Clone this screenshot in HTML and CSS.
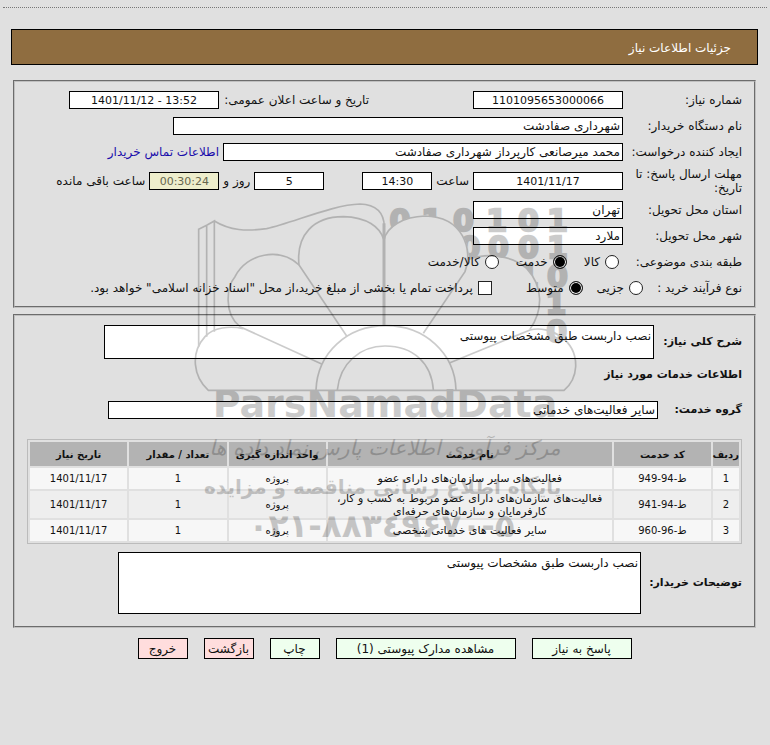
FILE: index.html
```html
<!DOCTYPE html>
<html lang="fa" dir="rtl">
<head>
    <meta charset="UTF-8">
    <meta name="viewport" content="width=device-width, initial-scale=1.0">
    <title>جزئیات اطلاعات نیاز</title>
    <link rel="stylesheet" href="styles.css">
</head>
<body>
    <hr class="top-line">
    <h1 class="title-bar">جزئیات اطلاعات نیاز</h1>

    <form class="need-form">
        <fieldset class="box">
            <div class="row">
                <label class="caption" for="need-no">شماره نیاز:</label>
                <input class="field medium center" id="need-no" value="1101095653000066" readonly>
                <label class="second-caption" for="announce">تاریخ و ساعت اعلان عمومی:</label>
                <input class="field medium center" id="announce" dir="ltr" value="1401/11/12 - 13:52" readonly>
            </div>
            <div class="row">
                <label class="caption" for="buyer">نام دستگاه خریدار:</label>
                <input class="field wide" id="buyer" value="شهرداری صفادشت" readonly>
            </div>
            <div class="row">
                <label class="caption" for="creator">ایجاد کننده درخواست:</label>
                <input class="field long" id="creator" value="محمد میرصانعی کارپرداز شهرداری صفادشت" readonly>
                <a class="contact" href="#">اطلاعات تماس خریدار</a>
            </div>
            <div class="row tall">
                <label class="caption" for="deadline">مهلت ارسال پاسخ: تا تاریخ:</label>
                <input class="field medium center" id="deadline" value="1401/11/17" readonly>
                <label class="unit" for="hour">ساعت</label>
                <input class="field small center" id="hour" value="14:30" readonly>
                <input class="field small center days" id="days" value="5" readonly>
                <label class="unit" for="days">روز و</label>
                <input class="field small center remain" id="remain" value="00:30:24" readonly>
                <label class="unit" for="remain">ساعت باقی مانده</label>
            </div>
            <div class="row">
                <label class="caption" for="province">استان محل تحویل:</label>
                <input class="field medium" id="province" value="تهران" readonly>
            </div>
            <div class="row">
                <label class="caption" for="city">شهر محل تحویل:</label>
                <input class="field medium" id="city" value="ملارد" readonly>
            </div>
            <div class="row">
                <span class="caption">طبقه بندی موضوعی:</span>
                <div class="options subject">
                    <label class="option"><input type="radio" name="subject">کالا</label>
                    <label class="option"><input type="radio" name="subject" checked>خدمت</label>
                    <label class="option"><input type="radio" name="subject">کالا/خدمت</label>
                </div>
            </div>
            <div class="row">
                <span class="caption narrow">نوع فرآیند خرید :</span>
                <div class="options">
                    <label class="option"><input type="radio" name="process">جزیی</label>
                    <label class="option"><input type="radio" name="process" checked>متوسط</label>
                    <label class="option payment"><input type="checkbox">پرداخت تمام یا بخشی از مبلغ خرید،از محل "اسناد خزانه اسلامی" خواهد بود.</label>
                </div>
            </div>
        </fieldset>

        <fieldset class="box details">
            <div class="detail-row">
                <label class="bold" for="summary">شرح کلی نیاز:</label>
                <textarea class="field area" id="summary" rows="2" readonly>نصب داربست طبق مشخصات پیوستی</textarea>
            </div>
            <h2 class="bold heading">اطلاعات خدمات مورد نیاز</h2>
            <div class="detail-row group">
                <label class="bold" for="group">گروه خدمت:</label>
                <input class="field" id="group" value="سایر فعالیت‌های خدماتی" readonly>
            </div>
            <table class="services">
                <colgroup>
                    <col class="col-index">
                    <col class="col-plain">
                    <col class="col-name">
                    <col class="col-plain">
                    <col class="col-plain">
                    <col class="col-plain">
                </colgroup>
                <thead>
                    <tr>
                        <th>ردیف</th>
                        <th>کد خدمت</th>
                        <th>نام خدمت</th>
                        <th>واحد اندازه گیری</th>
                        <th>تعداد / مقدار</th>
                        <th>تاریخ نیاز</th>
                    </tr>
                </thead>
                <tbody>
                    <tr>
                        <td>1</td>
                        <td><bdi dir="rtl">ط-94-949</bdi></td>
                        <td class="name">فعالیت‌های سایر سازمان‌های دارای عضو</td>
                        <td>پروژه</td>
                        <td>1</td>
                        <td>1401/11/17</td>
                    </tr>
                    <tr>
                        <td>2</td>
                        <td><bdi dir="rtl">ط-94-941</bdi></td>
                        <td class="name">فعالیت‌های سازمان‌های دارای عضو مربوط به کسب و کار، کارفرمایان و سازمان‌های حرفه‌ای</td>
                        <td>پروژه</td>
                        <td>1</td>
                        <td>1401/11/17</td>
                    </tr>
                    <tr>
                        <td>3</td>
                        <td><bdi dir="rtl">ط-96-960</bdi></td>
                        <td class="name">سایر فعالیت های خدماتی شخصی</td>
                        <td>پروژه</td>
                        <td>1</td>
                        <td>1401/11/17</td>
                    </tr>
                </tbody>
            </table>
            <div class="detail-row notes">
                <label class="bold" for="notes">توضیحات خریدار:</label>
                <textarea class="field area" id="notes" rows="4" readonly>نصب داربست طبق مشخصات پیوستی</textarea>
            </div>
        </fieldset>

        <div class="buttons">
            <button type="button" class="btn big">پاسخ به نیاز</button>
            <button type="button" class="btn huge">مشاهده مدارک پیوستی (1)</button>
            <button type="button" class="btn">چاپ</button>
            <button type="button" class="btn red">بازگشت</button>
            <button type="button" class="btn red">خروج</button>
        </div>
    </form>

    <svg class="watermark" viewBox="0 0 1200 1080" aria-hidden="true">
        <defs>
            <clipPath id="behind-petals">
                <path d="M612 0 H1200 V480 H1090 C1070 430 1050 410 1056 400 C1090 340 1085 280 1040 235 C990 200 930 190 866 208 C870 130 810 78 735 78 C680 78 640 100 622 130 Z"/>
            </clipPath>
        </defs>
        <g class="lines">
            <path d="M56 470 V118 L80 106 L103 93 V425 M80 106 V440"/>
            <path d="M103 93 C150 122 200 124 260 116 C340 98 460 44 540 42 C590 44 612 70 613 110"/>
            <path d="M612 100 V405" class="spine"/>
            <path d="M500 438 L357 225 C348 135 400 80 490 80 C560 82 600 110 612 150"/>
            <path d="M425 522 L180 410 C130 370 140 290 165 260 C200 190 300 170 357 225"/>
            <path d="M190 416 C150 407 100 412 75 440 C30 490 40 560 85 601 H1152 C1165 590 1185 570 1187 530 C1190 450 1110 405 1050 420 L810 518"/>
            <path d="M730 430 L855 245 C880 180 850 80 735 78 C670 80 620 110 612 150"/>
            <path d="M866 208 C930 185 1000 200 1040 235 C1090 290 1090 360 1050 418"/>
            <path d="M408 600 C412 490 500 407 618 407 C735 407 825 490 828 600"/>
            <path d="M472 600 C480 520 540 468 615 468 C700 468 755 520 760 600"/>
        </g>
        <g class="digits" clip-path="url(#behind-petals)">
            <text x="660" y="122">0</text>
            <text x="755" y="122">1</text>
            <text x="850" y="122">0</text>
            <text x="950" y="122">1</text>
            <text x="1045" y="122">0</text>
            <text x="1132" y="122">1</text>
            <text x="870" y="205">0</text>
            <text x="955" y="205">0</text>
            <text x="1045" y="205">0</text>
            <text x="1132" y="205">1</text>
            <text x="1045" y="290">1</text>
            <text x="1132" y="290">0</text>
            <text x="1128" y="373">1</text>
            <text x="1130" y="456">0</text>
        </g>
        <text class="brand" x="615" y="682">ParsNamadData</text>
        <text class="script" x="615" y="795">مرکز فرآوری اطلاعات پارس نماد داده ها</text>
        <text class="tagline" x="608" y="912">پایگاه اطلاع رسانی مناقصه و مزایده</text>
        <text class="phone" x="605" y="1042">۰۲۱-۸۸۳٤۹۶۷۰-۵</text>
    </svg>
</body>
</html>
```
FILE: styles.css
```css
* {
    box-sizing: border-box;
}

body {
    position: relative;
    margin: 0;
    padding: 7px 3px 0;
    background: #e0e0e0;
    color: #111;
    font-family: "DejaVu Sans", Tahoma, sans-serif;
    font-size: 12px;
    line-height: 14px;
}

.top-line {
    margin: 0;
    border: 0;
    border-top: 1px dotted #777;
}

.title-bar {
    display: flex;
    align-items: center;
    height: 36px;
    margin: 21px 9px 0 8px;
    padding: 2px 26px 0;
    border: 1px solid #000;
    background: #8f6d40;
    color: #fff;
    font-size: 12px;
    font-weight: normal;
}

.need-form {
    margin: 15px 11px 0 10px;
}

.box {
    min-width: 0;
    margin: 0 0 6px;
    padding: 5px 12px;
    border: 2px groove #c0c0c0;
}

.row {
    display: flex;
    align-items: center;
    gap: 4px;
    height: 26px;
}

.row.tall {
    height: 32px;
}

.caption {
    flex: 0 0 115px;
}

.caption.narrow {
    flex-basis: 91px;
}

.second-caption {
    width: 146px;
    margin-right: 100px;
    white-space: nowrap;
}

.field {
    height: 18px;
    margin: 0;
    padding: 0 2px;
    border: 1px solid #000;
    border-radius: 0;
    outline: 0;
    background: #fff;
    color: #111;
    font-family: inherit;
    font-size: 12px;
    line-height: 14px;
}

.center {
    font-size: 11px;
    text-align: center;
}

.small {
    width: 70px;
}

.medium {
    width: 150px;
}

.long {
    width: 400px;
}

.wide {
    width: 450px;
}

.days {
    margin-right: 34px;
}

.remain {
    background: #eec;
    color: #66664e;
}

.unit {
    min-width: 26px;
    white-space: nowrap;
}

.contact {
    color: #1a0dab;
    text-decoration: none;
}

.options {
    display: flex;
    align-items: center;
    gap: 14px;
    padding-right: 4px;
    white-space: nowrap;
}

.options.subject {
    gap: 17px;
}

.option {
    display: flex;
    align-items: center;
    gap: 5px;
}

.payment {
    margin-right: 20px;
}

.option input {
    appearance: none;
    flex: none;
    width: 14px;
    height: 14px;
    margin: 0;
    border: 1px solid #222;
    background: #fff;
}

.option input[type="radio"] {
    border-radius: 50%;
}

.option input[type="radio"]:checked {
    background: #000;
    box-shadow: inset 0 0 0 1px #fff;
}

.details {
    padding: 9px 12px 12px;
}

.bold {
    margin: 0;
    font-size: 11px;
    font-weight: bold;
    white-space: nowrap;
}

.detail-row {
    display: grid;
    grid-template-columns: 84px 550px;
    gap: 4px;
    align-items: center;
}

.area {
    display: block;
    width: 100%;
    height: 34px;
    padding-top: 3px;
    overflow: hidden;
    resize: none;
}

.heading {
    padding: 9px 0 19px;
}

.detail-row.group {
    grid-template-columns: 80px 550px;
}

.services {
    width: 100%;
    margin-top: 20px;
    border: 1px solid #bbb;
    border-collapse: separate;
    border-spacing: 2px;
    table-layout: fixed;
    font-size: 10px;
    line-height: 13px;
    text-align: center;
}

.services th {
    height: 24px;
    padding: 0;
    background: #b3b3b3;
    white-space: nowrap;
}

.services td {
    height: 21px;
    padding: 0 4px;
    background: #f7f7f7;
}

.services tr:nth-child(even) td {
    height: 27px;
    background: #eee;
}

.services .name {
    font-size: 11px;
}

.col-index {
    width: 26px;
}

.col-name {
    width: 284px;
}

.notes {
    grid-template-columns: 97px 523px;
    margin-top: 8px;
}

.notes .area {
    height: 62px;
}

.buttons {
    display: flex;
    justify-content: center;
    gap: 16px;
    padding-top: 4px;
}

.btn {
    width: 50px;
    height: 21px;
    padding: 0;
    border: 1px solid #000;
    background: #efe;
    color: #111;
    font-family: inherit;
    font-size: 12px;
    white-space: nowrap;
}

.big {
    width: 100px;
}

.huge {
    width: 180px;
}

.red {
    background: #fdd;
}

/* logo printed over the whole form */
.watermark {
    position: absolute;
    top: 190px;
    left: calc(50% - 205px);
    width: 400px;
    height: 360px;
    direction: ltr;
    opacity: 0.2;
    pointer-events: none;
}

.lines {
    fill: none;
    stroke: #000;
    stroke-width: 5;
}

.spine {
    stroke-width: 9;
}

.watermark text {
    fill: #000;
    font-weight: bold;
    text-anchor: middle;
}

.watermark .digits text {
    font-size: 90px;
    stroke: #000;
    stroke-width: 7;
}

.watermark .brand {
    font-size: 114px;
}

.watermark .script {
    font-size: 62px;
    font-style: italic;
    font-weight: normal;
}

.watermark .tagline {
    font-size: 60px;
}

.watermark .phone {
    font-size: 98px;
}
```
